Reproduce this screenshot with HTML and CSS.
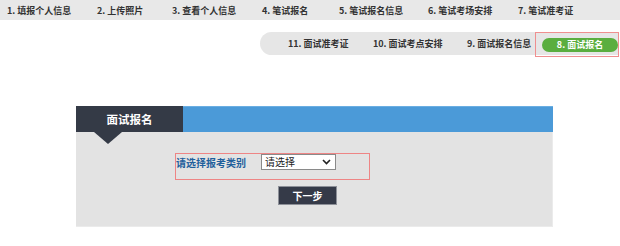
FILE: index.html
```html
<!DOCTYPE html>
<html lang="zh-CN">
<head>
    <meta charset="UTF-8">
    <title>面试报名</title>
    <link rel="stylesheet" href="styles.css">
</head>
<body>
    <div class="steps">
        <span class="step">1. 填报个人信息</span>
        <span class="step">2. 上传照片</span>
        <span class="step">3. 查看个人信息</span>
        <span class="step">4. 笔试报名</span>
        <span class="step">5. 笔试报名信息</span>
        <span class="step">6. 笔试考场安排</span>
        <span class="step">7. 笔试准考证</span>
    </div>

    <div class="sub-row">
        <div class="sub-steps">
            <span class="sub-step">11. 面试准考证</span>
            <span class="sub-step">10. 面试考点安排</span>
            <span class="sub-step">9. 面试报名信息</span>
            <div class="sub-active">
                <span class="sub-pill">8. 面试报名</span>
            </div>
        </div>
    </div>

    <div class="panel">
        <div class="panel-head">
            <div class="panel-tab">面试报名</div>
        </div>
        <div class="panel-body">
            <div class="field-row">
                <label for="exam-type">请选择报考类别</label>
                <div class="select-wrap">
                    <select id="exam-type" name="exam-type">
                        <option value="">请选择</option>
                    </select>
                    <svg class="chevron" width="9" height="6" viewBox="0 0 9 6">
                        <path d="M1 1 L4.5 4.5 L8 1" fill="none" stroke="#222" stroke-width="1.6"/>
                    </svg>
                </div>
            </div>
            <button type="button" class="btn">下一步</button>
        </div>
    </div>
</body>
</html>
```

FILE: styles.css
```css
body {
    margin: 0;
    font-family: "Noto Sans CJK SC", "Liberation Sans", sans-serif;
    background: #fff;
}

/* top step bar */
.steps {
    height: 20px;
    background: #e8e8e8;
    display: flex;
    align-items: center;
    padding-left: 7px;
}
.step {
    font-size: 9px;
    font-weight: bold;
    color: #333;
    white-space: nowrap;
    flex-shrink: 0;
}
.step:nth-child(1) { width: 90px; }
.step:nth-child(2) { width: 75px; }
.step:nth-child(3) { width: 90px; }
.step:nth-child(4) { width: 77px; }
.step:nth-child(5) { width: 89px; }
.step:nth-child(6) { width: 90px; }

/* interview steps */
.sub-row {
    display: flex;
    justify-content: flex-end;
    margin-top: 12px;
    padding-right: 2px;
}
.sub-steps {
    height: 23px;
    width: 358px;
    box-sizing: border-box;
    background: #e6e6e6;
    border-radius: 12px 0 0 12px;
    display: flex;
    align-items: center;
    padding-left: 28px;
}
.sub-step {
    font-size: 9px;
    font-weight: bold;
    color: #333;
    white-space: nowrap;
    flex-shrink: 0;
}
.sub-step:nth-child(1) { width: 85px; }
.sub-step:nth-child(2) { width: 94px; }
.sub-step:nth-child(3) { width: 68px; }
.sub-active {
    flex-shrink: 0;
    height: 25px;
    box-sizing: border-box;
    border: 1px solid #ef8f8f;
    padding-left: 6px;
    display: flex;
    align-items: center;
    margin-top: 2px;
}
.sub-pill {
    width: 76px;
    height: 14px;
    border-radius: 7px;
    background: #5aae3f;
    color: #fff;
    font-size: 9px;
    font-weight: bold;
    text-align: center;
    line-height: 14px;
}

/* panel */
.panel {
    width: 477px;
    margin: 51px 0 0 76px;
}
.panel-head {
    height: 26px;
    background: #4b9ad8;
    border-top: 1px solid #6aaee2;
    box-sizing: border-box;
}
.panel-tab {
    position: relative;
    width: 107px;
    height: 26px;
    margin-top: -1px;
    background: #343a46;
    color: #fff;
    font-size: 11.5px;
    font-weight: bold;
    text-align: center;
    line-height: 26px;
}
.panel-tab::after {
    content: "";
    position: absolute;
    left: 18px;
    top: 26px;
    border-left: 14px solid transparent;
    border-right: 14px solid transparent;
    border-top: 12px solid #343a46;
}
.panel-body {
    height: 95px;
    box-sizing: border-box;
    background: #e3e3e3;
    border-right: 1px solid #ebebeb;
    border-bottom: 1px solid #ebebeb;
    padding: 21px 0 0 99px;
}
.field-row {
    width: 195px;
    height: 27px;
    box-sizing: border-box;
    border: 1px solid #ee8585;
    display: flex;
    align-items: flex-start;
}
.field-row label {
    font-size: 10px;
    font-weight: bold;
    color: #1f5f9c;
    line-height: 18px;
    width: 85px;
    white-space: nowrap;
}
.select-wrap {
    position: relative;
    width: 75px;
    height: 16px;
}
.select-wrap select {
    appearance: none;
    -webkit-appearance: none;
    display: block;
    width: 75px;
    height: 16px;
    box-sizing: border-box;
    border: 1px solid #8a8a8a;
    border-radius: 0;
    background: #fff;
    font-family: "Noto Sans CJK SC", sans-serif;
    font-size: 10px;
    line-height: 14px;
    color: #222;
    padding: 0 0 0 3px;
    margin: 0;
}
.chevron {
    position: absolute;
    right: 5px;
    top: 5px;
}
.btn {
    display: block;
    margin: 6px 0 0 103px;
    width: 59px;
    height: 19px;
    padding: 0;
    background: #353a48;
    border: 1px solid #8d9098;
    color: #fff;
    font-family: "Noto Sans CJK SC", sans-serif;
    font-size: 10px;
    font-weight: bold;
    cursor: pointer;
}
```
